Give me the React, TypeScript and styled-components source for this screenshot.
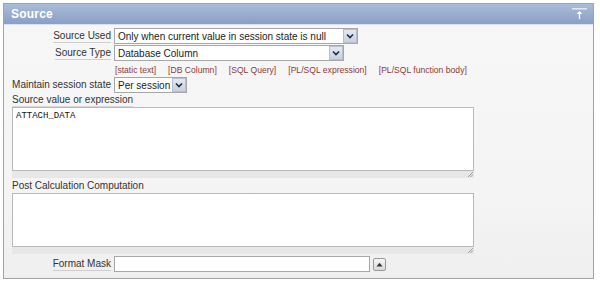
import React from "react";
import styled, { createGlobalStyle } from "styled-components";

const Global = createGlobalStyle`
  html, body { margin: 0; padding: 0; background: #ffffff; }
  body { font-family: "Liberation Sans", Arial, sans-serif; font-size: 10px; color: #333; }
`;

const Panel = styled.section`
  margin: 3px 0 0 3px;
  width: 591px;
  height: 276px;
  border: 1px solid #a3a3a3;
  box-sizing: border-box;
  background: linear-gradient(#f7f7f7, #f4f4f4 70%, #efefef);
  display: flex;
  flex-direction: column;
`;

const Header = styled.header`
  height: 21px;
  flex: none;
  box-sizing: border-box;
  background: linear-gradient(#abbcd9, #8a9fc5);
  border-bottom: 1px solid #d9e1ee;
  display: flex;
  align-items: center;
  justify-content: space-between;
  padding: 0 6px 0 7px;
`;

const Title = styled.h2`
  margin: 0;
  font-size: 12px;
  font-weight: bold;
  color: #ffffff;
  letter-spacing: 0.2px;
`;

const Body = styled.div`
  padding: 3px 0 0 8px;
  display: flex;
  flex-direction: column;
`;

const Row = styled.div<{ $mt?: number }>`
  display: grid;
  grid-template-columns: 99px auto;
  column-gap: 3px;
  align-items: start;
  height: 17px;
  margin-top: ${(p) => p.$mt ?? 0}px;
`;

const Label = styled.label<{ $line?: boolean }>`
  justify-self: end;
  white-space: nowrap;
  line-height: 12px;
  margin-top: 2px;
  color: #333;
  border-bottom: ${(p) => (p.$line ? "1px solid #cfcfcf" : "1px solid transparent")};
`;

const BlockLabel = styled.div<{ $mt?: number; $line?: boolean }>`
  align-self: flex-start;
  margin-top: ${(p) => p.$mt ?? 0}px;
  line-height: 12px;
  color: #333;
  border-bottom: ${(p) => (p.$line ? "1px solid #d6d6d6" : "1px solid transparent")};
`;

const Select = styled.div<{ $w: number }>`
  width: ${(p) => p.$w}px;
  height: 16px;
  box-sizing: border-box;
  border: 1px solid #a7a7a7;
  background: #fff;
  display: flex;
  align-items: center;
  justify-content: space-between;
  padding-left: 3px;
  font-size: 10px;
  color: #222;
  white-space: nowrap;
  overflow: hidden;
`;

const Arrow = styled.span`
  width: 14px;
  height: 14px;
  box-sizing: border-box;
  border: 1px solid #b8bfcc;
  background: linear-gradient(#e4e8f1, #c9d0de);
  display: flex;
  align-items: center;
  justify-content: center;
  flex: none;
`;

const Links = styled.div`
  display: flex;
  gap: 12px;
  padding-left: 103px;
  height: 15px;
  align-items: center;
`;

const Link = styled.a`
  color: #8e3a3a;
  font-size: 8.6px;
  text-decoration: none;
  white-space: nowrap;
`;

const Area = styled.div<{ $mt?: number }>`
  width: 462px;
  display: flex;
  flex-direction: column;
  margin-top: ${(p) => p.$mt ?? 0}px;
`;

const AreaBox = styled.div<{ $h: number }>`
  height: ${(p) => p.$h}px;
  box-sizing: border-box;
  border: 1px solid #b9b9b9;
  background: #fff;
  padding: 3px 3px;
  font-family: "Liberation Mono", "Courier New", monospace;
  font-size: 9px;
  color: #111;
`;

const Grip = styled.div`
  height: 7px;
  background: #e7e7e7;
  display: flex;
  justify-content: flex-end;
  align-items: flex-end;
`;

const Input = styled.div`
  width: 256px;
  height: 16px;
  box-sizing: border-box;
  border: 1px solid #a7a7a7;
  background: #fff;
`;

const Field = styled.div`
  display: flex;
  align-items: center;
  gap: 3px;
`;

const PopButton = styled.button`
  width: 13px;
  height: 13px;
  padding: 0;
  box-sizing: border-box;
  border: 1px solid #9a9a9a;
  border-radius: 2px;
  background: linear-gradient(#f6f6f6, #d9d9d9);
  display: flex;
  align-items: center;
  justify-content: center;
`;

const Chevron = () => (
  <svg width="8" height="6" viewBox="0 0 8 6">
    <path d="M1 1.5 L4 4.5 L7 1.5" fill="none" stroke="#1d2a44" strokeWidth="1.6" />
  </svg>
);

const CollapseIcon = () => (
  <svg width="15" height="12" viewBox="0 0 15 12">
    <rect x="0" y="0" width="15" height="1.5" fill="#e3e8f1" />
    <path d="M7.5 3 L4.5 6 H6.8 V11 H8.2 V6 H10.5 Z" fill="#ffffff" />
  </svg>
);

const GripIcon = () => (
  <svg width="7" height="7" viewBox="0 0 7 7">
    <path d="M6 1 L1 6 M6 3.5 L3.5 6" stroke="#8a8a8a" strokeWidth="0.8" />
  </svg>
);

const links = [
  "[static text]",
  "[DB Column]",
  "[SQL Query]",
  "[PL/SQL expression]",
  "[PL/SQL function body]",
];

export default function App() {
  return (
    <>
      <Global />
      <Panel>
        <Header>
          <Title>Source</Title>
          <CollapseIcon />
        </Header>
        <Body>
          <Row>
            <Label $line>Source Used</Label>
            <Select $w={244}>
              <span>Only when current value in session state is null</span>
              <Arrow><Chevron /></Arrow>
            </Select>
          </Row>
          <Row>
            <Label $line>Source Type</Label>
            <Select $w={230}>
              <span>Database Column</span>
              <Arrow><Chevron /></Arrow>
            </Select>
          </Row>
          <Links>
            {links.map((l) => (
              <Link key={l}>{l}</Link>
            ))}
          </Links>
          <Row>
            <Label>Maintain session state</Label>
            <Select $w={73}>
              <span>Per session</span>
              <Arrow><Chevron /></Arrow>
            </Select>
          </Row>
          <BlockLabel $line>Source value or expression</BlockLabel>
          <Area>
            <AreaBox $h={64}>ATTACH_DATA</AreaBox>
            <Grip><GripIcon /></Grip>
          </Area>
          <BlockLabel $mt={2}>Post Calculation Computation</BlockLabel>
          <Area>
            <AreaBox $h={54} />
            <Grip><GripIcon /></Grip>
          </Area>
          <Row $mt={2}>
            <Label $line>Format Mask</Label>
            <Field>
              <Input />
              <PopButton>
                <svg width="7" height="5" viewBox="0 0 7 5">
                  <path d="M0.5 4.5 L3.5 0.8 L6.5 4.5 Z" fill="#333" />
                </svg>
              </PopButton>
            </Field>
          </Row>
        </Body>
      </Panel>
    </>
  );
}
